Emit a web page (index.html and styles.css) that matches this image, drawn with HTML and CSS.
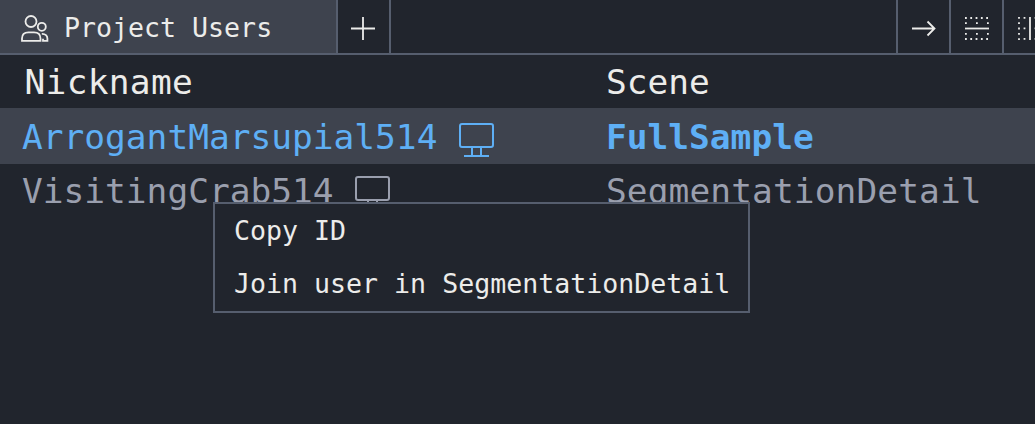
FILE: index.html
```html
<!DOCTYPE html>
<html lang="en">
<head>
<meta charset="utf-8">
<title>Project Users</title>
<link rel="stylesheet" href="styles.css">
</head>
<body>
<header class="bar">
  <div class="tab">
    <svg class="users" width="28" height="28" viewBox="0 0 28 28"><circle cx="10" cy="7.500" r="5.500"/><circle cx="20.800" cy="12.800" r="4"/><path d="M1 26.800V24.500C1 20.500 3.500 18.300 7.500 18.300H13C17 18.300 19.500 20.500 19.500 24.500V26.800Z"/><path d="M20.800 19.800C24.500 19.600 26.400 22 26.400 24.500V26.800H22V24.800"/></svg>
    <span>Project Users</span>
  </div>
  <button class="tool add" aria-label="Add tab"><svg width="24" height="24"><path d="M12 0V23M0 11.500H24"/></svg></button>
  <div class="spacer"></div>
  <button class="tool" aria-label="Next"><svg width="24" height="24"><path d="M0 11.500H22.500M15.500 4.500L22.500 11.500L15.500 18.500"/></svg></button>
  <button class="tool" aria-label="Split rows"><svg width="24" height="24"><path d="M0 11.500H24"/><path class="dots" d="M0 1H24M0 22H24M0 6.200H2M11 6.200H13M22 6.200H24M0 16.800H2M11 16.800H13M22 16.800H24"/></svg></button>
  <button class="tool" aria-label="Split columns"><svg width="24" height="24"><path d="M12 0V23"/><path class="dots" d="M1 0V23M23 0V23M6.500 0V2M6.500 10.500V12.500M6.500 21V23M17.500 0V2M17.500 10.500V12.500M17.500 21V23"/></svg></button>
</header>
<main class="table">
  <div class="row head"><span class="nickname">Nickname</span><span>Scene</span></div>
  <div class="row current"><span class="name">ArrogantMarsupial514<svg class="monitor" width="36" height="36" viewBox="0 0 36 36"><rect x="1" y="1" width="33" height="23" rx="2"/><path d="M13 24V32M22 24V32M5 33H30"/></svg></span><span>FullSample</span></div>
  <div class="row other"><span class="name">VisitingCrab514<svg class="monitor" width="36" height="36" viewBox="0 0 36 36"><rect x="1" y="1" width="33" height="23" rx="2"/><path d="M13 24V32M22 24V32M5 33H30"/></svg></span><span class="scene">SegmentationDetail</span></div>
</main>
<div class="menu"><div>Copy ID</div><div>Join user in SegmentationDetail</div></div>
</body>
</html>
```
FILE: styles.css
```css
* { box-sizing: border-box; }
body {
  margin: 0;
  height: 424px;
  overflow: hidden;
  background: #21252d;
  color: #ececea;
  font: 26.6px "DejaVu Sans Mono", monospace;
}
svg { flex: none; fill: none; stroke: currentColor; stroke-width: 1.8; display: block; }
.bar { display: flex; height: 55px; border-bottom: 2px solid #565e6e; overflow: hidden; }
.tab {
  display: flex;
  flex: none;
  align-items: center;
  gap: 15px;
  width: 336px;
  padding: 2px 0 0 21px;
  background: #3e434e;
  white-space: nowrap;
}
.tool {
  display: flex;
  flex: none;
  width: 53px;
  padding: 17px 0 0 14px;
  border: 0;
  border-left: 2px solid #565e6e;
  background: none;
  color: inherit;
}
.add { width: 55px; padding-left: 13px; border-right: 2px solid #565e6e; }
.dots { stroke-width: 1.8; stroke-dasharray: 1.8 3.5; }
.spacer { width: 505px; flex: none; }
.table { font-size: 34.5px; }
.row {
  display: grid;
  grid-template-columns: 584px 1fr;
  height: 54px;
  padding-left: 22px;
  line-height: 54px;
  white-space: nowrap;
}
.head { height: 53px; }
.nickname { padding-left: 2.5px; letter-spacing: 0.3px; }
.current { height: 56px; line-height: 58px; background: #3e434e; color: #5eaff5; }
.current > span:last-child { font-weight: bold; }
.other { color: #9a9fae; }
.scene { letter-spacing: 0.1px; }
.name { display: flex; align-items: center; gap: 22px; }
.monitor { stroke-width: 2; margin-top: 6px; }
.current .monitor { margin-top: 8px; }
.other .name { gap: 21px; }
.menu {
  position: absolute;
  left: 213px;
  top: 202px;
  width: 537px;
  height: 111px;
  padding-left: 19px;
  border: 2px solid #565e6e;
  background: #21252d;
  line-height: 53px;
}
```
